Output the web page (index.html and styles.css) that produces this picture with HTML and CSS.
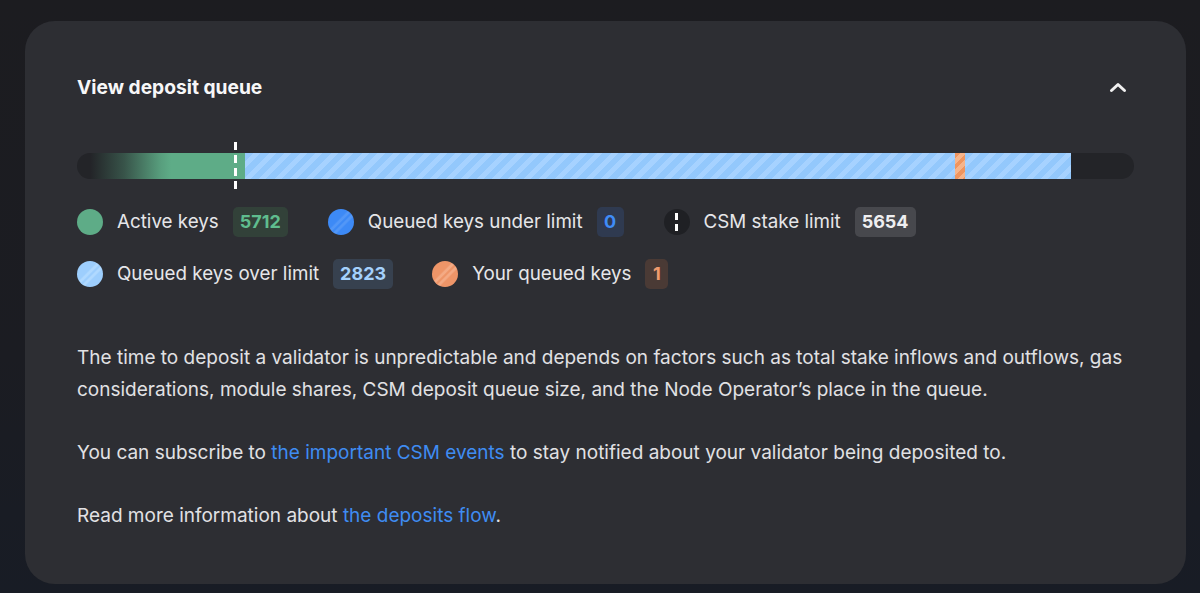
FILE: index.html
```html
<!DOCTYPE html>
<html lang="en">
<head>
<meta charset="utf-8">
<title>View deposit queue</title>
<link rel="stylesheet" href="styles.css">
</head>
<body>
<div class="page">
  <section class="card">
    <header class="card-header">
      <h2 class="title">View deposit queue</h2>
      <svg class="chevron" width="18" height="11" viewBox="0 0 18 11" aria-hidden="true">
        <path d="M2.5 8.5 L9 2.5 L15.5 8.5" fill="none" stroke="#f0f0f0" stroke-width="3" stroke-linecap="round" stroke-linejoin="round"/>
      </svg>
    </header>

    <div class="queue">
      <div class="track">
        <div class="seg seg-active" style="width:15.9%"></div>
        <div class="seg seg-over" style="width:67.2%"></div>
        <div class="seg seg-yours" style="width:0.95%"></div>
        <div class="seg seg-over" style="width:10.0%"></div>
      </div>
      <div class="limit-line" style="left:14.95%"></div>
    </div>

    <div class="legend">
      <div class="legend-row">
        <div class="legend-item">
          <span class="dot dot-active"></span>
          <span class="label">Active keys</span>
          <span class="badge badge-active">5712</span>
        </div>
        <div class="legend-item">
          <span class="dot dot-under"></span>
          <span class="label">Queued keys under limit</span>
          <span class="badge badge-under">0</span>
        </div>
        <div class="legend-item">
          <span class="dot dot-limit"><span class="dot-limit-line"></span></span>
          <span class="label">CSM stake limit</span>
          <span class="badge badge-limit">5654</span>
        </div>
      </div>
      <div class="legend-row">
        <div class="legend-item">
          <span class="dot dot-over"></span>
          <span class="label">Queued keys over limit</span>
          <span class="badge badge-over">2823</span>
        </div>
        <div class="legend-item">
          <span class="dot dot-yours"></span>
          <span class="label">Your queued keys</span>
          <span class="badge badge-yours">1</span>
        </div>
      </div>
    </div>

    <div class="text">
      <p>The time to deposit a validator is unpredictable and depends on factors such as total stake inflows and outflows, gas considerations, module shares, CSM deposit queue size, and the Node Operator’s place in the queue.</p>
      <p>You can subscribe to <a href="#">the important CSM events</a> to stay notified about your validator being deposited to.</p>
      <p>Read more information about <a href="#">the deposits flow</a>.</p>
    </div>
  </section>
</div>
</body>
</html>
```

FILE: styles.css
```css
* { box-sizing: border-box; }

html, body {
  margin: 0;
  padding: 0;
  height: 100%;
}

body {
  background: linear-gradient(180deg, #1c1c20 0%, #1b1c22 60%, #181c25 100%);
  font-family: Inter, "Noto Sans", "Liberation Sans", sans-serif;
  color: #e3e3e6;
  overflow: hidden;
}

.page {
  padding: 21px 14px 0 25px;
}

.card {
  background: #2d2e33;
  border-radius: 30px;
  height: 563px;
  padding: 54px 52px 51px 52px;
}

.card-header {
  display: flex;
  align-items: center;
  justify-content: space-between;
  height: 24px;
}

.title {
  margin: 0;
  font-size: 19.2px;
  font-weight: 700;
  line-height: 24px;
  color: #f7f7f8;
}

.chevron {
  margin-right: 7px;
  display: block;
}

.queue {
  position: relative;
  margin-top: 54px;
  height: 26px;
}

.track {
  display: flex;
  height: 26px;
  background: #232428;
  border-radius: 13px;
  overflow: hidden;
}

.seg { height: 100%; flex: none; }

.seg-active {
  background: linear-gradient(90deg, rgba(94,172,135,0) 0%, rgba(94,172,135,0) 8%, rgba(94,172,135,0.35) 28%, rgba(94,172,135,0.9) 50%, #5eac87 56%, #5eac87 100%);
}

.seg-over {
  background: repeating-linear-gradient(135deg, #93c8fc 0 6px, #a6d2ff 6px 11px);
}

.seg-yours {
  background: repeating-linear-gradient(135deg, #ef955f 0 4px, #f6b48a 4px 8px);
}

.limit-line {
  position: absolute;
  top: -11px;
  width: 3px;
  height: 47px;
  margin-left: -1.5px;
  background: repeating-linear-gradient(180deg, #ffffff 0 8px, transparent 8px 13px);
}

.legend {
  margin-top: 28px;
  display: flex;
  flex-direction: column;
  gap: 22px;
}

.legend-row {
  display: flex;
  align-items: center;
  gap: 39px;
}

.legend-row:first-child { gap: 40px; }

.legend-item {
  display: flex;
  align-items: center;
  height: 30px;
}

.dot {
  width: 26px;
  height: 26px;
  border-radius: 50%;
  flex: none;
  margin-right: 14px;
  position: relative;
}

.dot-active { background: #5eac87; }

.dot-under {
  background: linear-gradient(135deg, #3d8af6 0 40%, #5297f7 44% 48%, #3d8af6 51% 54%, #5297f7 57% 61%, #3d8af6 65% 100%);
}

.dot-over {
  background: linear-gradient(135deg, #9dcefd 0 40%, #b0d9ff 44% 48%, #9dcefd 51% 54%, #b0d9ff 57% 61%, #9dcefd 65% 100%);
}

.dot-yours {
  background: linear-gradient(135deg, #ee9568 0 40%, #f4aa84 44% 48%, #ee9568 51% 54%, #f4aa84 57% 61%, #ee9568 65% 100%);
}

.dot-limit { background: #1f2024; }

.dot-limit-line {
  position: absolute;
  left: 11.5px;
  top: 4px;
  width: 3px;
  height: 18px;
  background: repeating-linear-gradient(180deg, #ffffff 0 7px, transparent 7px 11px);
}

.label {
  font-size: 18.8px;
  line-height: 24px;
  color: #e6e6e9;
  margin-right: 14px;
  white-space: nowrap;
}

.badge {
  height: 30px;
  padding: 0 7px;
  min-width: 27px;
  border-radius: 5px;
  font-size: 18px;
  font-weight: 700;
  line-height: 30px;
  text-align: center;
}

.badge-active { background: #324139; color: #5fbd8e; }
.badge-under { background: #2f3a50; color: #3f8cf7; }
.badge-limit { background: #47484d; color: #efeff1; }
.badge-over { background: #37414f; color: #a4d1fd; }
.badge-yours { background: #4a3a35; color: #ef9a6d; padding: 0 7px; min-width: 23px; }

.text {
  margin-top: 53px;
}

.text p {
  margin: 0 0 31px 0;
  font-size: 19px;
  line-height: 32px;
  color: #e1e1e4;
}

.text p:last-child { margin-bottom: 0; }

.text a {
  color: #3f8cf2;
  text-decoration: none;
}
```
